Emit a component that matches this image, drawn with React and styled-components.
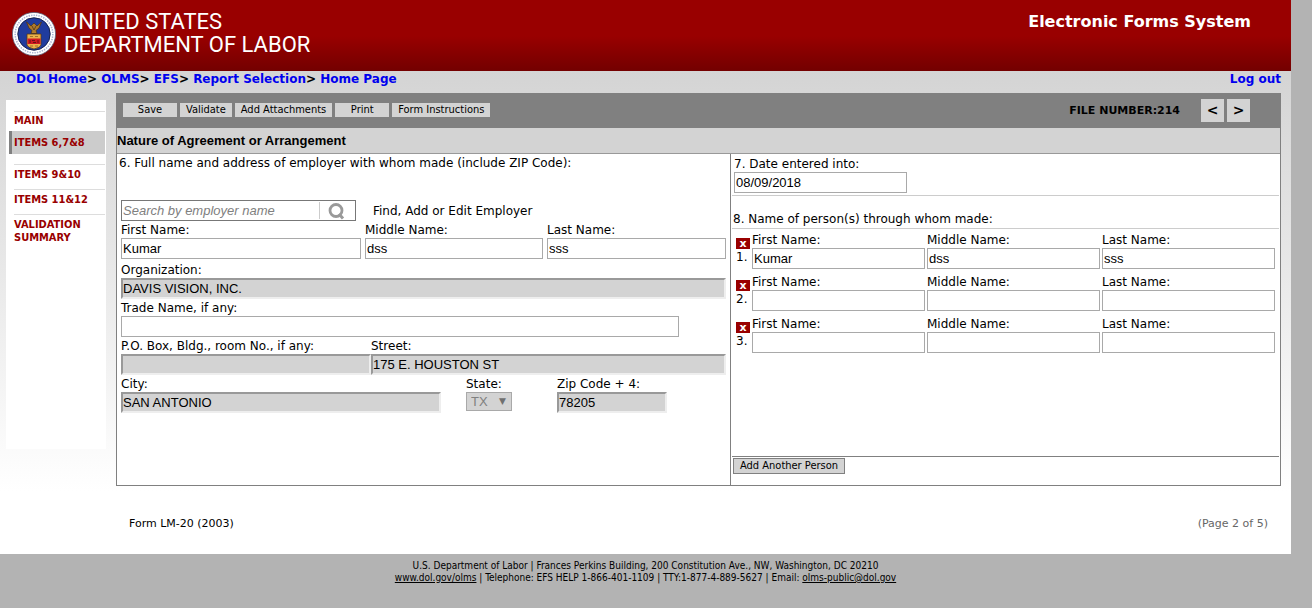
import React from "react";
import styled, { createGlobalStyle, css } from "styled-components";

const sans = '"DejaVu Sans", Verdana, sans-serif';
const condensed = '"DejaVu Sans Condensed", Tahoma, sans-serif';
const arial = '"Liberation Sans", Arial, sans-serif';

const GlobalStyle = createGlobalStyle`
  *, *::before, *::after { box-sizing: border-box; }
  body {
    margin: 0;
    background: #b3b3b3;
    color: #000;
    font-family: ${sans};
    font-size: 12px;
  }
`;

const Page = styled.div`
  margin-right: 21px;
`;

const Header = styled.header`
  display: flex;
  justify-content: space-between;
  align-items: flex-start;
  height: 71px;
  padding: 10px 40px 0 12px;
  color: #fff;
  background: linear-gradient(#990000 0, #990000 36px, #730000 71px);
`;

const Brand = styled.div`
  display: flex;
  gap: 6px;
`;

const Seal = styled.svg`
  width: 46px;
  height: 46px;
  margin-top: 2px;
`;

const BrandName = styled.div`
  font-family: Roboto, sans-serif;
  font-size: 22px;
  line-height: 23px;
`;

const SystemName = styled.h1`
  margin: 0;
  font-size: 16px;
  line-height: 24px;
  font-weight: bold;
`;

const Content = styled.div`
  padding: 0 10px 20px 6px;
  background: linear-gradient(#d4d4d4 0, #ffffff 420px);
`;

const TopBar = styled.div`
  display: flex;
  justify-content: space-between;
  height: 22px;
  padding-left: 10px;
  font-size: 12px;
  line-height: 16px;
  font-weight: bold;
`;

const NavLink = styled.a`
  color: #0000ee;
  text-decoration: none;
`;

const Columns = styled.div`
  display: grid;
  grid-template-columns: 100px minmax(0, 1fr);
  gap: 10px;
  align-items: start;
`;

const Sidebar = styled.nav`
  display: flex;
  flex-direction: column;
  min-height: 349px;
  margin-top: 7px;
  padding: 11px 1px 0 3px;
  background: #fff;
`;

const SideItem = styled.a`
  margin-left: 5px;
  border-top: 1px solid #ddd;
  padding: 3px 0 8px;
  min-height: 25px;
  color: #990000;
  font-family: ${condensed};
  font-size: 11px;
  line-height: 13px;
  font-weight: bold;
  text-decoration: none;
  ${(p) =>
    p.$first &&
    css`
      min-height: 20px;
      padding: 2px 0 4px;
    `}
  ${(p) =>
    p.$active &&
    css`
      margin: 0 0 10px;
      padding: 5px 0 5px 2px;
      min-height: 23px;
      border-top: 0;
      border-left: 3px solid #808080;
      background: #ccc;
    `}
`;

const Toolbar = styled.div`
  display: flex;
  align-items: center;
  gap: 3px;
  height: 34px;
  padding: 0 31px 0 7px;
  background: #808080;
`;

const ToolButton = styled.button`
  min-width: ${(p) => (p.$wide ? "54px" : "0")};
  height: 14px;
  padding: 0 6px;
  border: 0;
  background: #d3d3d3;
  color: #000;
  font-family: ${condensed};
  font-size: 11px;
  line-height: 14px;
`;

const FileNumber = styled.div`
  margin-left: auto;
  margin-right: 18px;
  font-size: 11px;
  font-weight: bold;
`;

const PageButton = styled.button`
  width: 23px;
  height: 23px;
  padding: 0;
  border: 0;
  background: #d3d3d3;
  color: #000;
  font-family: ${sans};
  font-size: 14px;
  font-weight: bold;
`;

const Panel = styled.main`
  border: 1px solid #808080;
  border-top: 0;
  background: #fff;
`;

const PanelTitle = styled.h2`
  margin: 0;
  height: 27px;
  border-top: 1px solid #808080;
  border-bottom: 1px solid #999;
  background: #d3d3d3;
  font-family: ${arial};
  font-size: 13px;
  line-height: 25px;
  font-weight: bold;
`;

const Halves = styled.div`
  display: grid;
  grid-template-columns: minmax(0, 614fr) minmax(0, 549fr);
  min-height: 331px;
`;

const LeftHalf = styled.section`
  padding: 0 4px;
  border-right: 1px solid #808080;
`;

const RightHalf = styled.section`
  display: flex;
  flex-direction: column;
  padding: 1px 1px 10px;
`;

const Question = styled.h3`
  margin: 0;
  font-size: 12px;
  line-height: 19px;
  font-weight: normal;
`;

const LeftQuestion = styled(Question)`
  height: 46px;
  margin-left: -2px;
`;

const SearchRow = styled.div`
  display: flex;
  align-items: center;
  gap: 17px;
`;

const SearchBox = styled.div`
  display: flex;
  align-items: center;
  width: 235px;
  height: 21px;
  border: 1px solid #777;
  background: #fff;
`;

const SearchInput = styled.input`
  flex: 1;
  min-width: 0;
  height: 17px;
  padding: 0 1px;
  border: 0;
  border-right: 1px solid #ccc;
  font-family: ${arial};
  font-size: 13px;
  font-style: italic;
  &::placeholder {
    color: #808080;
    opacity: 1;
  }
`;

const SearchButton = styled.button`
  display: flex;
  justify-content: center;
  align-items: center;
  width: 35px;
  height: 19px;
  padding: 0 4px 0 0;
  border: 0;
  background: none;
`;

const FieldRow = styled.div`
  display: grid;
  grid-template-columns: ${(p) => p.$cols || "minmax(0, 1fr)"};
  column-gap: ${(p) => p.$gap || 0}px;
  margin-bottom: ${(p) => p.$after || 0}px;
`;

const Label = styled.label`
  display: block;
  height: 17px;
  line-height: 19px;
  white-space: nowrap;
`;

const TextInput = styled.input`
  display: block;
  width: 100%;
  height: 21px;
  padding: 0 1px;
  border: 1px solid #a9a9a9;
  border-radius: 0;
  background: #fff;
  color: #000;
  font-family: ${arial};
  font-size: 13px;
  &:read-only {
    padding: 0;
    border: 2px solid;
    border-color: #999 #eee #eee #999;
    background: #d3d3d3;
  }
`;

const SelectWrap = styled.div`
  position: relative;
  width: 46px;
`;

const Select = styled.select`
  appearance: none;
  display: block;
  width: 100%;
  height: 19px;
  padding: 0 4px;
  border: 1px solid #a9a9a9;
  border-radius: 0;
  background: #d3d3d3;
  color: #808080;
  opacity: 1;
  font-family: ${arial};
  font-size: 13px;
`;

const SelectArrow = styled.span`
  position: absolute;
  top: 0;
  right: 6px;
  color: #707070;
  font-size: 9px;
  line-height: 18px;
  pointer-events: none;
`;

const DateBlock = styled.div`
  height: 41px;
  padding-left: 2px;
  border-bottom: 1px solid #ccc;
`;

const DateField = styled.div`
  width: 173px;
`;

const PersonsTitle = styled(Question)`
  height: 33px;
  padding: 14px 0 0 1px;
  border-bottom: 1px solid #ccc;
`;

const Persons = styled.ol`
  flex: 1;
  margin: 0;
  padding: 2px 4px 0;
  list-style: none;
`;

const Person = styled.li`
  display: grid;
  grid-template-columns: 14px minmax(0, 1fr) minmax(0, 1fr) minmax(0, 1fr);
  column-gap: 2px;
  margin-bottom: 4px;
`;

const PersonIndex = styled.div`
  padding-top: 7px;
  line-height: 16px;
`;

const RemoveButton = styled.button`
  display: block;
  width: 14px;
  height: 11px;
  padding: 0;
  border: 0;
  background: #990000;
  color: #fff;
  font-family: ${sans};
  font-size: 11px;
  line-height: 10px;
  font-weight: bold;
`;

const AddRow = styled.div`
  padding: 1px;
  border-top: 1px solid #808080;
`;

const AddButton = styled(ToolButton)`
  display: block;
  height: 16px;
  border: 1px solid #808080;
`;

const FormFooter = styled.div`
  display: flex;
  justify-content: space-between;
  padding: 28px 13px 0;
  font-size: 11px;
  line-height: 20px;
`;

const PageCount = styled.span`
  color: #666;
`;

const SiteFooter = styled.footer`
  padding-top: 6px;
  text-align: center;
  font-family: ${condensed};
  font-size: 10px;
  line-height: 12px;
`;

const FooterLink = styled.a`
  color: #000;
`;

function Field({ id, label, ...rest }) {
  return (
    <div>
      <Label htmlFor={id}>{label}</Label>
      <TextInput id={id} type="text" {...rest} />
    </div>
  );
}

function LaborSeal() {
  return (
    <Seal viewBox="0 0 46 46" role="img" aria-label="Department of Labor seal">
      <circle cx="22" cy="22" r="21.6" fill="#fff" stroke="#59607a" strokeWidth="0.8" />
      <circle cx="22" cy="22" r="18.8" fill="none" stroke="#a9b3d2" strokeWidth="1.6" strokeDasharray="1.4 1.1" />
      <circle cx="22" cy="22" r="16.2" fill="#203c9e" stroke="#17234f" strokeWidth="1" />
      <path
        d="M14.500 10 L17 16 L20 18.500 L19 21.500 H25 L24 18.500 L27 16 L29.500 10 L25 14 L23.500 12.500 L22 11 L20.500 12.500 L19 14 Z"
        fill="#b07a2c"
        stroke="#4b341c"
        strokeWidth="0.8"
      />
      <path d="M20 14 L22 18 L24 14" fill="none" stroke="#4b341c" strokeWidth="0.8" />
      <path d="M15 22 H29 V33 Q28.500 35.500 22 37 Q15.500 35.500 15 33 Z" fill="#ecb04a" stroke="#54391b" strokeWidth="0.8" />
      <rect x="15.500" y="26.500" width="13" height="5.500" fill="#cf1720" />
      <path d="M18 28 V31 M20 28.500 H23 M21 30.500 H24 M26 28 V31" stroke="#4f1014" strokeWidth="0.8" />
      <path d="M18 24.500 H21 M23 24.500 H26 M18 34 H21 M23 34 H26" stroke="#8c6125" strokeWidth="0.8" />
    </Seal>
  );
}

const people = [
  { first: "Kumar", middle: "dss", last: "sss" },
  { first: "", middle: "", last: "" },
  { first: "", middle: "", last: "" },
];

export default function App() {
  return (
    <>
      <GlobalStyle />
      <Page>
        <Header>
          <Brand>
            <LaborSeal />
            <BrandName>
              UNITED STATES
              <br />
              DEPARTMENT OF LABOR
            </BrandName>
          </Brand>
          <SystemName>Electronic Forms System</SystemName>
        </Header>
        <Content>
          <TopBar>
            <nav aria-label="Breadcrumb">
              <NavLink href="#dol">DOL Home</NavLink>&gt; <NavLink href="#olms">OLMS</NavLink>&gt;{" "}
              <NavLink href="#efs">EFS</NavLink>&gt; <NavLink href="#reports">Report Selection</NavLink>&gt;{" "}
              <NavLink href="#home">Home Page</NavLink>
            </nav>
            <NavLink href="#logout">Log out</NavLink>
          </TopBar>
          <Columns>
            <Sidebar aria-label="Form sections">
              <SideItem href="#main" $first>MAIN</SideItem>
              <SideItem href="#items678" $active>ITEMS 6,7&amp;8</SideItem>
              <SideItem href="#items910">ITEMS 9&amp;10</SideItem>
              <SideItem href="#items1112">ITEMS 11&amp;12</SideItem>
              <SideItem href="#validation">VALIDATION SUMMARY</SideItem>
            </Sidebar>
            <div>
              <Toolbar>
                <ToolButton type="button" $wide>Save</ToolButton>
                <ToolButton type="button">Validate</ToolButton>
                <ToolButton type="button">Add Attachments</ToolButton>
                <ToolButton type="button" $wide>Print</ToolButton>
                <ToolButton type="button">Form Instructions</ToolButton>
                <FileNumber>FILE NUMBER:214</FileNumber>
                <PageButton type="button" aria-label="Previous page">&lt;</PageButton>
                <PageButton type="button" aria-label="Next page">&gt;</PageButton>
              </Toolbar>
              <Panel>
                <PanelTitle>Nature of Agreement or Arrangement</PanelTitle>
                <Halves>
                  <LeftHalf>
                    <LeftQuestion>
                      6. Full name and address of employer with whom made (include ZIP Code):
                    </LeftQuestion>
                    <SearchRow>
                      <SearchBox>
                        <SearchInput type="text" placeholder="Search by employer name" aria-label="Search by employer name" />
                        <SearchButton type="button" aria-label="Search">
                          <svg width="18" height="18" viewBox="0 0 18 18" fill="none" stroke="#999" aria-hidden="true">
                            <circle cx="9" cy="8.500" r="6" strokeWidth="2.800" />
                            <path d="M12 12 L16 16.500" strokeWidth="3" />
                          </svg>
                        </SearchButton>
                      </SearchBox>
                      <span>Find, Add or Edit Employer</span>
                    </SearchRow>
                    <FieldRow $cols="minmax(0, 240fr) minmax(0, 178fr) minmax(0, 179fr)" $gap={4} $after={2}>
                      <Field id="emp-first" label="First Name:" defaultValue="Kumar" />
                      <Field id="emp-middle" label="Middle Name:" defaultValue="dss" />
                      <Field id="emp-last" label="Last Name:" defaultValue="sss" />
                    </FieldRow>
                    <FieldRow>
                      <Field id="org" label="Organization:" defaultValue="DAVIS VISION, INC." readOnly />
                    </FieldRow>
                    <FieldRow $cols="minmax(0, 558fr) minmax(0, 47fr)">
                      <Field id="trade" label="Trade Name, if any:" defaultValue="" />
                    </FieldRow>
                    <FieldRow $cols="minmax(0, 250fr) minmax(0, 355fr)">
                      <Field id="pobox" label="P.O. Box, Bldg., room No., if any:" defaultValue="" readOnly />
                      <Field id="street" label="Street:" defaultValue="175 E. HOUSTON ST" readOnly />
                    </FieldRow>
                    <FieldRow $cols="minmax(0, 320fr) 66px minmax(0, 110fr) minmax(0, 34fr)" $gap={25}>
                      <Field id="city" label="City:" defaultValue="SAN ANTONIO" readOnly />
                      <div>
                        <Label htmlFor="state">State:</Label>
                        <SelectWrap>
                          <Select id="state" disabled defaultValue="TX">
                            <option>TX</option>
                          </Select>
                          <SelectArrow aria-hidden="true">▼</SelectArrow>
                        </SelectWrap>
                      </div>
                      <Field id="zip" label="Zip Code + 4:" defaultValue="78205" readOnly />
                    </FieldRow>
                  </LeftHalf>
                  <RightHalf>
                    <DateBlock>
                      <DateField>
                        <Field id="date" label="7. Date entered into:" defaultValue="08/09/2018" />
                      </DateField>
                    </DateBlock>
                    <PersonsTitle>8. Name of person(s) through whom made:</PersonsTitle>
                    <Persons>
                      {people.map((person, i) => (
                        <Person key={i}>
                          <PersonIndex>
                            <RemoveButton type="button" aria-label={`Remove person ${i + 1}`}>x</RemoveButton>
                            {i + 1}.
                          </PersonIndex>
                          <Field id={`first-${i}`} label="First Name:" defaultValue={person.first} />
                          <Field id={`middle-${i}`} label="Middle Name:" defaultValue={person.middle} />
                          <Field id={`last-${i}`} label="Last Name:" defaultValue={person.last} />
                        </Person>
                      ))}
                    </Persons>
                    <AddRow>
                      <AddButton type="button">Add Another Person</AddButton>
                    </AddRow>
                  </RightHalf>
                </Halves>
              </Panel>
              <FormFooter>
                <span>Form LM-20 (2003)</span>
                <PageCount>(Page 2 of 5)</PageCount>
              </FormFooter>
            </div>
          </Columns>
        </Content>
        <SiteFooter>
          U.S. Department of Labor | Frances Perkins Building, 200 Constitution Ave., NW, Washington, DC 20210
          <br />
          <FooterLink href="#olms-site">www.dol.gov/olms</FooterLink> | Telephone: EFS HELP 1-866-401-1109 |
          TTY:1-877-4-889-5627 | Email: <FooterLink href="#email">olms-public@dol.gov</FooterLink>
        </SiteFooter>
      </Page>
    </>
  );
}
